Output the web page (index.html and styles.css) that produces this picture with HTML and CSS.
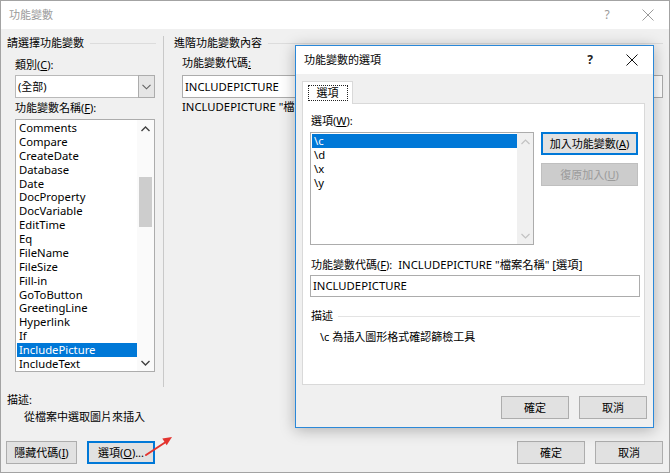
FILE: index.html
```html
<!DOCTYPE html>
<html lang="zh-Hant">
<head>
<meta charset="utf-8">
<title>功能變數</title>
<link rel="stylesheet" href="styles.css">
</head>
<body>
<div class="win">
  <div class="titlebar">
    <span class="title muted">功能變數</span>
    <span class="q muted">?</span>
    <span class="xbtn"><svg width="12" height="12" viewBox="0 0 12 12"><path d="M0.5 0.5L11.5 11.5M11.5 0.5L0.5 11.5" stroke="#9a9a9a" stroke-width="1" fill="none"/></svg></span>
  </div>

  <div class="main">
    <div class="left">
      <div class="group-h"><span>請選擇功能變數</span><i class="rule"></i></div>
      <div class="indent">
        <div class="lbl lbl-first">類別(<u>C</u>):</div>
        <div class="combo">
          <span class="val">(全部)</span>
          <span class="drop"><svg width="9" height="6" viewBox="0 0 9 6"><path d="M0.5 0.8L4.5 4.8L8.5 0.8" stroke="#606060" stroke-width="1.1" fill="none"/></svg></span>
        </div>
        <div class="lbl">功能變數名稱(<u>F</u>):</div>
        <div class="listbox">
          <div class="items">
            <div class="item">Comments</div>
            <div class="item">Compare</div>
            <div class="item">CreateDate</div>
            <div class="item">Database</div>
            <div class="item">Date</div>
            <div class="item">DocProperty</div>
            <div class="item">DocVariable</div>
            <div class="item">EditTime</div>
            <div class="item">Eq</div>
            <div class="item">FileName</div>
            <div class="item">FileSize</div>
            <div class="item">Fill-in</div>
            <div class="item">GoToButton</div>
            <div class="item">GreetingLine</div>
            <div class="item">Hyperlink</div>
            <div class="item">If</div>
            <div class="item sel">IncludePicture</div>
            <div class="item">IncludeText</div>
          </div>
          <div class="vscroll">
            <span class="arrow"><svg width="9" height="6" viewBox="0 0 9 6"><path d="M0.5 5L4.5 1L8.5 5" stroke="#404040" stroke-width="1.4" fill="none"/></svg></span>
            <span class="track-a"></span>
            <span class="thumb"></span>
            <span class="track-b"></span>
            <span class="arrow"><svg width="9" height="6" viewBox="0 0 9 6"><path d="M0.5 1L4.5 5L8.5 1" stroke="#404040" stroke-width="1.4" fill="none"/></svg></span>
          </div>
        </div>
      </div>
    </div>
    <div class="vdiv"></div>
    <div class="right">
      <div class="group-h"><span>進階功能變數內容</span><i class="rule"></i></div>
      <div class="indent2">
        <div class="lbl lbl-code">功能變數代碼<u>:</u></div>
        <div class="textbox">INCLUDEPICTURE</div>
        <div class="syntax">INCLUDEPICTURE "檔案名稱" [選項]</div>
      </div>
    </div>
  </div>

  <div class="desc">
    <div>描述:</div>
    <div class="desc-text">從檔案中選取圖片來插入</div>
  </div>

  <div class="footer">
    <div class="btn w71">隱藏代碼(<u>I</u>)</div>
    <div class="btn w68 focus">選項(<u>O</u>)...</div>
    <div class="spacer"></div>
    <div class="btn w68">確定</div>
    <div class="btn w68">取消</div>
  </div>

  <svg class="red-arrow" width="40" height="30" viewBox="0 0 40 30">
    <path d="M5 24L24 11.5" stroke="#e3342f" stroke-width="2" fill="none" stroke-linecap="round"/>
    <path d="M31 6L25.7 14.2L21.3 7.6Z" fill="#e3342f"/>
  </svg>

  <div class="dialog">
    <div class="titlebar dtitle">
      <span class="title">功能變數的選項</span>
      <span class="q">?</span>
      <span class="xbtn"><svg width="12" height="12" viewBox="0 0 12 12"><path d="M0.5 0.5L11.5 11.5M11.5 0.5L0.5 11.5" stroke="#111" stroke-width="1" fill="none"/></svg></span>
    </div>
    <div class="tabs">
      <div class="tab"><span>選項</span></div>
    </div>
    <div class="panel">
      <div class="lbl">選項(<u>W</u>):</div>
      <div class="opt-row">
        <div class="optlist">
          <div class="items">
            <div class="oitem sel">\c</div>
            <div class="oitem">\d</div>
            <div class="oitem">\x</div>
            <div class="oitem">\y</div>
          </div>
          <div class="vscroll dis">
            <span class="arrow"><svg width="9" height="6" viewBox="0 0 9 6"><path d="M0.5 5L4.5 1L8.5 5" stroke="#c2c2c2" stroke-width="1.2" fill="none"/></svg></span>
            <span class="track-b"></span>
            <span class="arrow"><svg width="9" height="6" viewBox="0 0 9 6"><path d="M0.5 1L4.5 5L8.5 1" stroke="#c2c2c2" stroke-width="1.2" fill="none"/></svg></span>
          </div>
        </div>
        <div class="opt-btns">
          <div class="btn w97 focus">加入功能變數(<u>A</u>)</div>
          <div class="btn w97 disabled">復原加入(<u>U</u>)</div>
        </div>
      </div>
      <div class="lbl code-lbl">功能變數代碼(<u>F</u>):<span class="code-syn">INCLUDEPICTURE "檔案名稱" [選項]</span></div>
      <div class="textbox dtext">INCLUDEPICTURE</div>
      <div class="group-h dhead"><span>描述</span><i class="rule"></i></div>
      <div class="ddesc">\c 為插入圖形格式確認篩檢工具</div>
    </div>
    <div class="dfooter">
      <div class="btn w68">確定</div>
      <div class="btn w68">取消</div>
    </div>
  </div>
</div>
</body>
</html>
```

FILE: styles.css
```css
* { box-sizing: border-box; }
html, body { margin: 0; padding: 0; }
body {
  width: 670px;
  height: 473px;
  overflow: hidden;
  background: #f0f0f0;
  font-family: "Noto Sans", "Noto Sans CJK TC", sans-serif;
  font-size: 11px;
  line-height: 16px;
  color: #000;
}
u { text-decoration: underline; text-underline-offset: 1px; }

.win {
  position: relative;
  width: 670px;
  height: 473px;
  border: 1px solid #a3a3a3;
  background: #f0f0f0;
}

/* title bars */
.titlebar {
  height: 28px;
  background: #fff;
  display: flex;
  align-items: center;
  padding: 0 10px 0 8px;
}
.titlebar .title { flex: 1; font-size: 11px; }
.muted { color: #9a9a9a; }
.titlebar .q { width: 20px; text-align: center; font-size: 12px; }
.titlebar .xbtn { width: 22px; margin-left: 20px; display: flex; justify-content: center; align-items: center; }

/* main two columns */
.main {
  display: flex;
  height: 358px;
  padding: 6px 6px 0 6px;
}
.left { width: 149px; }
.vdiv { width: 1px; height: 351px; margin: 1px 0 0 7px; background: #c9c9c9; }
.right { flex: 1; margin-left: 10px; }

.group-h { display: flex; align-items: center; }
.group-h .rule { flex: 1; height: 1px; background: #dcdcdc; margin-left: 6px; }

.indent { padding-left: 8px; }
.lbl { margin-top: 2px; white-space: nowrap; }
.lbl-first { margin-top: 6px; }

.combo {
  display: flex;
  width: 140px;
  height: 23px;
  margin-top: 2px;
  background: #fff;
  border: 1px solid #b9b9b9;
}
.combo .val { flex: 1; padding-left: 2px; line-height: 21px; }
.combo .drop {
  width: 17px;
  margin: -1px -1px -1px 0;
  background: #e5e5e5;
  border: 1px solid #acacac;
  display: flex;
  align-items: center;
  justify-content: center;
}

.listbox {
  display: flex;
  width: 140px;
  height: 253px;
  margin-top: 3px;
  background: #fff;
  border: 1px solid #acacac;
}
.items { flex: 1; padding: 1px 0 0 1px; overflow: hidden; }
.item {
  height: 13.88px;
  line-height: 13.88px;
  padding-left: 2px;
  white-space: nowrap;
  font-size: 11.3px;
}
.sel { background: #0078d7; color: #fff; }

.vscroll {
  width: 17px;
  display: flex;
  flex-direction: column;
  align-items: center;
  background: #fafafa;
}
.vscroll .arrow { height: 17px; width: 100%; display: flex; align-items: center; justify-content: center; }
.vscroll .track-a { height: 40px; }
.vscroll .thumb { height: 50px; width: 13px; background: #cdcdcd; }
.vscroll .track-b { flex: 1; }

/* right pane */
.indent2 { padding-left: 8px; }
.lbl-code { margin-top: 4px; }
.textbox {
  height: 23px;
  margin-top: 4px;
  background: #fff;
  border: 1px solid #acacac;
  padding-left: 2px;
  line-height: 21px;
  font-size: 11.3px;
}
.syntax { margin-top: 1px; white-space: nowrap; font-size: 11.3px; }

/* bottom of main window */
.desc { padding: 5px 0 0 6px; }
.desc-text { margin-top: 1px; padding-left: 17px; }

.footer {
  display: flex;
  align-items: center;
  gap: 10px;
  margin-top: 16px;
  padding: 0 6px 0 5px;
}
.spacer { flex: 1; }

.btn {
  height: 23px;
  border: 1px solid #adadad;
  background: #e1e1e1;
  display: flex;
  align-items: center;
  justify-content: center;
  white-space: nowrap;
}
.btn.focus { border: 2px solid #0078d7; }
.btn.disabled { background: #cccccc; border-color: #bfbfbf; color: #9b9b9b; }
.w71 { width: 71px; }
.w68 { width: 68px; }
.w97 { width: 97px; }

.red-arrow { position: absolute; left: 140px; top: 430px; }

/* overlay dialog */
.dialog {
  position: absolute;
  left: 294px;
  top: 44px;
  width: 359px;
  height: 383px;
  border: 1px solid #2b88d8;
  background: #f0f0f0;
  box-shadow: 0 2px 14px rgba(0, 0, 0, 0.28);
  display: flex;
  flex-direction: column;
}
.dtitle .title { color: #000; }
.dtitle .q { font-weight: 700; color: #222; }
.dtitle .xbtn { margin-left: 21px; }

.tabs { display: flex; height: 22px; margin: 7px 0 0 6px; }
.tab {
  position: relative;
  z-index: 1;
  width: 51px;
  height: 23px;
  background: #fff;
  border: 1px solid #d9d9d9;
  border-bottom: none;
  display: flex;
  align-items: center;
  justify-content: center;
}
.tab span { border: 1px dotted #222; padding: 0 8px; line-height: 14px; }

.panel {
  height: 282px;
  margin: 0 8px 0 6px;
  background: #fff;
  border: 1px solid #d9d9d9;
  padding: 9px 6px 0 7px;
}
.panel .lbl { margin-top: 0; padding-left: 1px; }
.opt-row { display: flex; margin-top: 3px; }
.optlist {
  display: flex;
  width: 224px;
  height: 113px;
  background: #fff;
  border: 1px solid #acacac;
}
.oitem { height: 14px; line-height: 14px; padding-left: 2px; font-size: 11.3px; }
.vscroll.dis { width: 16px; background: #f0f0f0; }
.opt-btns { display: flex; flex-direction: column; gap: 8px; margin-left: 7px; }

.panel .code-lbl { margin-top: 12px; }
.code-syn { margin-left: 6px; font-size: 11.3px; }
.dtext { width: 330px; height: 22px; margin-top: 2px; line-height: 20px; }
.dhead { width: 330px; margin-top: 11px; padding-left: 1px; }
.dhead .rule { margin-left: 5px; background: #e3e3e3; }
.ddesc { margin-top: 5px; padding-left: 10px; }

.dfooter {
  display: flex;
  justify-content: flex-end;
  gap: 10px;
  margin-top: 11px;
  padding-right: 6px;
}
```
